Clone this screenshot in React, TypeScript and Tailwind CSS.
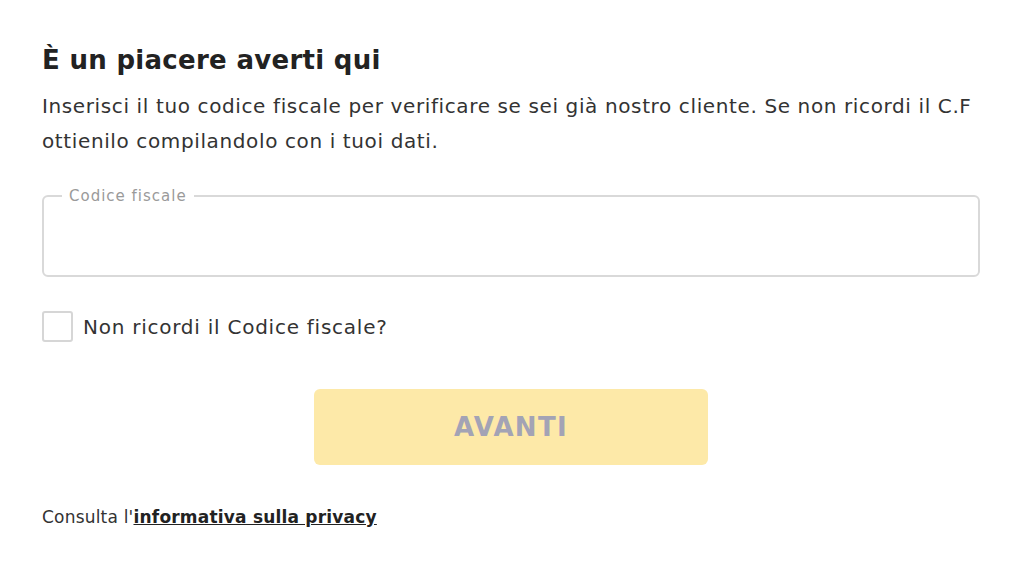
import React from "react";

export default function App() {
  return (
    <div className="w-[1024px] h-[576px] bg-white overflow-hidden" style={{ fontFamily: '"DejaVu Sans", "Open Sans", sans-serif' }}>
      <div className="pl-[42px] pr-[40px] pt-[40px]">
        <h1 className="text-[26px] leading-[40px] font-bold tracking-[0.3px] text-[#222]">È un piacere averti qui</h1>
        <p className="mt-[9px] text-[20px] leading-[35px] tracking-[0.62px] text-[#333] whitespace-nowrap">
          Inserisci il tuo codice fiscale per verificare se sei già nostro cliente. Se non ricordi il C.F
          <br />
          ottienilo compilandolo con i tuoi dati.
        </p>
        <fieldset className="mt-[29px] mr-[4px] h-[89px] border-2 border-[#d9d9d9] rounded-[6px] px-[18px]">
          <legend className="px-[7px] text-[15px] leading-[16px] tracking-[1px] text-[#9a9a9a]">Codice fiscale</legend>
        </fieldset>
        <label className="mt-[34px] flex items-center gap-[10px]">
          <span className="w-[31px] h-[31px] border-2 border-[#d6d6d6] rounded-[3px] block" />
          <span className="text-[20px] tracking-[0.75px] text-[#333]">Non ricordi il Codice fiscale?</span>
        </label>
        <div className="mt-[47px] flex justify-center pr-[4px]">
          <button className="w-[394px] h-[76px] rounded-[6px] bg-[#fde9a8] text-[26px] font-bold tracking-[1.3px] text-[#a3a3b5]">AVANTI</button>
        </div>
        <p className="mt-[40px] text-[17px] tracking-[0.2px] text-[#333]">
          Consulta l'<a className="font-bold underline text-[#222]">informativa sulla privacy</a>
        </p>
      </div>
    </div>
  );
}
